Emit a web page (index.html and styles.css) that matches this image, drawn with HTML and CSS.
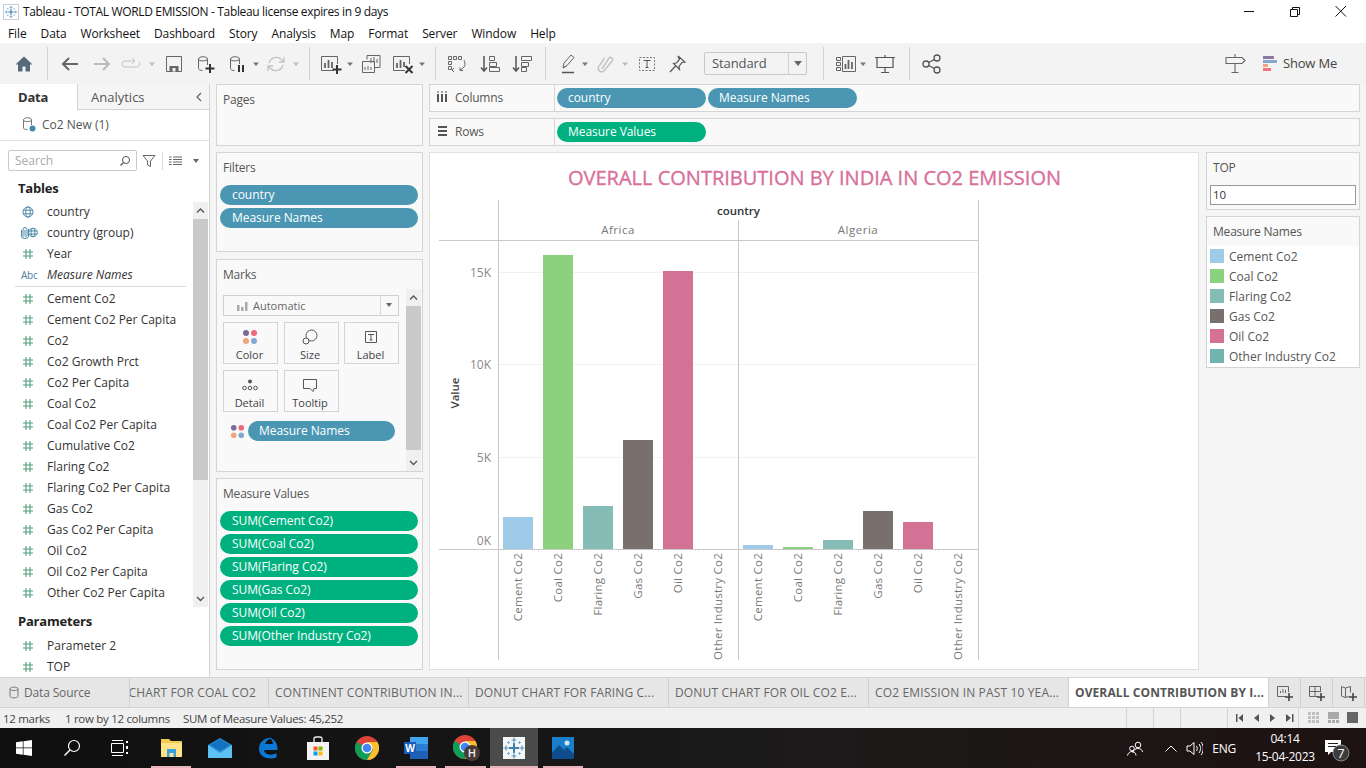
FILE: index.html
```html
<!DOCTYPE html>
<html lang="en">
<head>
<meta charset="utf-8">
<title>Tableau - TOTAL WORLD EMISSION</title>
<link rel="stylesheet" href="styles.css">
</head>
<body>
<svg class="defs" width="0" height="0" aria-hidden="true">
  <defs>
    <symbol id="hash" viewBox="0 0 12 12"><path d="M4 1v10M8 1v10M1 4h10M1 8h10" fill="none" stroke="#4f9e7b" stroke-width="1.1"/></symbol>
    <symbol id="globe" viewBox="0 0 12 12"><g fill="none" stroke="#4f8aa8"><circle cx="6" cy="6" r="5"/><ellipse cx="6" cy="6" rx="2.2" ry="5"/><path d="M1 4.2h10M1 7.8h10"/></g></symbol>
    <symbol id="caret" viewBox="0 0 8 24"><path d="M1 10.5h6l-3 3.5z" fill="#777"/></symbol>
    <symbol id="caretl" viewBox="0 0 8 24"><path d="M1 10.5h6l-3 3.5z" fill="#bbb"/></symbol>
    <symbol id="dots" viewBox="0 0 16 16"><circle cx="4" cy="4" r="3" fill="#7b6a94"/><circle cx="12" cy="4" r="3" fill="#ee6a78"/><circle cx="4" cy="12" r="3" fill="#f0a67c"/><circle cx="12" cy="12" r="3" fill="#84a8d0"/></symbol>
    <symbol id="up" viewBox="0 0 15 15"><path d="M4 9.5l3.5-3.5 3.5 3.5" fill="none" stroke="#555" stroke-width="1.4"/></symbol>
    <symbol id="down" viewBox="0 0 15 15"><path d="M4 6l3.5 3.5L11 6" fill="none" stroke="#555" stroke-width="1.4"/></symbol>
    <symbol id="flake" viewBox="0 0 24 24"><g fill="none"><path d="M12 7v10M7 12h10" stroke="#3f7ea8" stroke-width="2"/><path d="M12 1.500v5M9.500 4h5M12 17.500v5M9.500 20h5M1.500 12h5M4 9.500v5M17.500 12h5M20 9.500v5" stroke="#5a94bc" stroke-width="1.200"/><path d="M6.500 5v3M5 6.500h3M17.500 5v3M16 6.500h3M6.500 16v3M5 17.500h3M17.500 16v3M16 17.500h3" stroke="#7fb0d0" stroke-width="1"/></g></symbol>
  </defs>
</svg>

<header class="titlebar">
  <svg class="app-icon" width="16" height="16" viewBox="0 0 24 24"><use href="#flake"/></svg>
  <span class="title-text">Tableau - TOTAL WORLD EMISSION - Tableau license expires in 9 days</span>
  <div class="win-controls">
    <svg width="46" height="22" viewBox="0 0 46 22"><path d="M18 10.500h10" stroke="#111"/></svg>
    <svg width="46" height="22" viewBox="0 0 46 22"><path d="M18.500 8.500h7v7h-7zM20.500 8.500v-2h7v7h-2" fill="none" stroke="#111"/></svg>
    <svg width="46" height="22" viewBox="0 0 46 22"><path d="M17.500 5l10.500 10.500M28 5L17.500 15.500" stroke="#111" fill="none"/></svg>
  </div>
</header>

<nav class="menubar">
  <span>File</span><span>Data</span><span>Worksheet</span><span>Dashboard</span><span>Story</span><span>Analysis</span><span>Map</span><span>Format</span><span>Server</span><span>Window</span><span>Help</span>
</nav>

<div class="toolbar">
  <svg class="tb ml12" viewBox="0 0 24 24"><path d="M12 4.500L3.500 12.500H6v7h4.500v-5h3v5H18v-7h2.500z" fill="#566a7d"/></svg>
  <i class="sep ml11"></i>
  <svg class="tb ml10" viewBox="0 0 24 24"><path d="M20 12H5M11 6l-6 6 6 6" fill="none" stroke="#666" stroke-width="2"/></svg>
  <svg class="tb ml8" viewBox="0 0 24 24"><path d="M4 12h15M13 6l6 6-6 6" fill="none" stroke="#bbb" stroke-width="2"/></svg>
  <svg class="tb ml5" viewBox="0 0 24 24"><path d="M15 9H6a3 3 0 0 0 0 6h12a3 3 0 0 0 2-5M13 6l3 3-3 3" fill="none" stroke="#c4c4c4"/></svg>
  <svg class="cr ml5"><use href="#caretl"/></svg>
  <svg class="tb ml6" viewBox="0 0 24 24"><path d="M4.500 4.500h15v15h-15z" fill="none" stroke="#666"/><path d="M7.500 14h9v5.500h-9z" fill="#666"/><path d="M10.500 16h3v3.500h-3z" fill="#f3f3f3"/></svg>
  <svg class="tb ml7" viewBox="0 0 24 24"><path d="M5.500 7c0-3 9-3 9 0v6M5.500 7c0 2.500 9 2.500 9 0M5.500 7v9.500c0 1 1.500 2 4 2" fill="none" stroke="#666"/><path d="M17 12v9M12.500 16.500h9" stroke="#333" stroke-width="2"/></svg>
  <svg class="tb ml8" viewBox="0 0 24 24"><path d="M5.500 7c0-3 9-3 9 0v5M5.500 7c0 2.500 9 2.500 9 0M5.500 7v9.500c0 1 1.500 2 4 2" fill="none" stroke="#666"/><path d="M14 13v7M18 13v7" stroke="#333" stroke-width="2"/></svg>
  <svg class="cr ml3"><use href="#caret"/></svg>
  <svg class="tb ml4" viewBox="0 0 24 24"><path d="M5 11a7.500 7.500 0 0 1 13-3l2 2M19 13a7.500 7.500 0 0 1-13 3l-2-2M20 5v5h-5M4 19v-5h5" fill="none" stroke="#c4c4c4" stroke-width="1.300"/></svg>
  <svg class="cr ml4"><use href="#caretl"/></svg>
  <i class="sep ml9"></i>
  <svg class="tb ml9" viewBox="0 0 24 24"><path d="M15 18.500H2.500v-14h16V12" fill="none" stroke="#666"/><path d="M6 11v5M9.500 8v8M13 10v6" stroke="#666" stroke-width="1.800"/><path d="M18 13v9M13.500 17.500h9" stroke="#333" stroke-width="2"/></svg>
  <svg class="cr ml3"><use href="#caret"/></svg>
  <svg class="tb ml5" viewBox="0 0 24 24"><path d="M8 7.500V3.500h13v12h-5M3.500 9.500h12v11h-12z" fill="#f3f3f3" stroke="#666"/><path d="M12 11V6M15 11V5M18 11V7M6 18v-3M9 18v-4M12 18v-3" stroke="#666"/></svg>
  <svg class="tb ml8" viewBox="0 0 24 24"><path d="M14 18.500H2.500v-14h16V12" fill="none" stroke="#666"/><path d="M6 11v5M9.500 8v8M13 10v5" stroke="#666" stroke-width="1.800"/><path d="M14.500 14l7 7M21.500 14l-7 7" stroke="#333" stroke-width="2"/></svg>
  <svg class="cr ml3"><use href="#caret"/></svg>
  <i class="sep ml9"></i>
  <svg class="tb ml9" viewBox="0 0 24 24"><path d="M3.500 4.500h3v3h-3zM8.500 4.500h3v3h-3zM13.500 4.500h3v3h-3zM3.500 9.500h3v3h-3zM3.500 14.500h3v3h-3z" fill="none" stroke="#666"/><path d="M19 8c2 4 1 8-4 10M15 15.500V18.500h3M9 16l-2 2 2 2" fill="none" stroke="#666"/></svg>
  <svg class="tb ml9" viewBox="0 0 24 24"><path d="M6 4v15M3 15.500L6 19l3-3.500" fill="none" stroke="#555" stroke-width="1.500"/><path d="M11.500 4.500h5v4h-5zM11.500 10.500h7v4h-7zM11.500 15.500h10v4h-10z" fill="none" stroke="#666"/></svg>
  <svg class="tb ml8" viewBox="0 0 24 24"><path d="M6 4v15M3 15.500L6 19l3-3.500" fill="none" stroke="#555" stroke-width="1.500"/><path d="M11.500 4.500h10v4h-10zM11.500 10.500h7v4h-7zM11.500 15.500h5v4h-5z" fill="none" stroke="#666"/></svg>
  <i class="sep ml11"></i>
  <svg class="tb ml10" viewBox="0 0 24 24"><path d="M7 16l1-5 7-8 3 2.500-7 8zM7 16l4-2.500" fill="none" stroke="#666"/><path d="M6 20.500h12" stroke="#555" stroke-width="1.500"/></svg>
  <svg class="cr ml1"><use href="#caret"/></svg>
  <svg class="tb ml4" viewBox="0 0 24 24"><path d="M9 17l7-11a2.200 2.200 0 0 1 3.500 2.500L11 19a3.500 3.500 0 0 1-5.500-4l6-9" fill="none" stroke="#c4c4c4" stroke-width="1.500"/></svg>
  <svg class="cr ml4"><use href="#caretl"/></svg>
  <svg class="tb ml6" viewBox="0 0 24 24"><path d="M4.500 5.500h15v13h-15z" fill="none" stroke="#777" stroke-dasharray="2 1.500"/><path d="M8.500 8.500h7M12 8.500v7M10.500 15.500h3" fill="none" stroke="#555"/></svg>
  <svg class="tb ml6" viewBox="0 0 24 24"><path d="M13 4l7 6-3 .5-3 4 .5 3-6-6 3-.5 3-3.500zM10.500 14L5 20" fill="none" stroke="#555" stroke-width="1.200"/></svg>
  <div class="std-select"><span class="std-text">Standard</span><span class="std-arrow"></span></div>
  <i class="sep ml16"></i>
  <svg class="tb ml10" viewBox="0 0 24 24"><path d="M2.500 5.500h4v3h-4zM2.500 10.500h4v3h-4zM2.500 15.500h4v3h-4zM8.500 4.500h13v15h-13z" fill="none" stroke="#666"/><path d="M11.500 17v-5M14.500 17V8M18 17v-7" stroke="#666" stroke-width="1.800"/></svg>
  <svg class="cr ml1"><use href="#caret"/></svg>
  <svg class="tb ml6" viewBox="0 0 24 24"><path d="M2 5.500h20M4 5.500v10h16v-10M12 15.500v5M8 20.500h8M12 3v2.500" fill="none" stroke="#555" stroke-width="1.200"/></svg>
  <i class="sep ml12"></i>
  <svg class="tb ml10" viewBox="0 0 24 24"><g fill="none" stroke="#555" stroke-width="1.300"><circle cx="6" cy="12" r="3"/><circle cx="17" cy="6" r="3"/><circle cx="17" cy="18" r="3"/><path d="M8.500 10.500l6-3M8.500 13.500l6 3"/></g></svg>
  <svg class="tb tb-sign" viewBox="0 0 24 24"><path d="M12 2v3M3 5.500h16l3 3-3 3H3zM12 11.500V20M8.500 20.500h7" fill="none" stroke="#666" stroke-width="1.100"/></svg>
  <svg class="showme-icon" width="14" height="16" viewBox="0 0 14 16"><path d="M0 0h11v3H0z" fill="#8d7aa3"/><path d="M0 4h14v3H0z" fill="#84a8d0"/><path d="M0 8h5v3H0z" fill="#f0a67c"/><path d="M0 12h8v3H0z" fill="#f4737e"/></svg>
  <span class="showme-text">Show Me</span>
</div>

<main class="main">
  <aside class="sidebar">
    <div class="side-tabs">
      <div class="side-tab active">Data</div>
      <div class="side-tab">Analytics<svg class="collapse" width="10" height="12" viewBox="0 0 10 12"><path d="M7 2L3 6l4 4" fill="none" stroke="#666" stroke-width="1.200"/></svg></div>
    </div>
    <div class="ds-row">
      <svg width="14" height="16" viewBox="0 0 14 16"><path d="M1.500 4c0-3 8-3 8 0v5M1.500 4c0 2.200 8 2.200 8 0M1.500 4v8c0 1 1.500 1.500 4 1.500" fill="none" stroke="#777"/><circle cx="10.500" cy="12.500" r="3" fill="#3f8aae"/></svg>
      <span>Co2 New (1)</span>
    </div>
    <div class="search-row">
      <div class="searchbox"><span>Search</span><svg width="12" height="12" viewBox="0 0 12 12"><circle cx="7" cy="5" r="3.500" fill="none" stroke="#555"/><path d="M4.500 7.500L1.500 10.500" stroke="#555" stroke-width="1.300"/></svg></div>
      <svg class="filter-ic" width="14" height="14" viewBox="0 0 14 14"><path d="M1 1.500h12L8.500 7v5.500L5.500 11V7z" fill="none" stroke="#666"/></svg>
      <i class="search-sep"></i>
      <svg width="13" height="10" viewBox="0 0 13 10"><path d="M0 1h2.500M4 1h9M0 3.500h2.500M4 3.500h9M0 6h2.500M4 6h9M0 8.500h2.500M4 8.500h9" stroke="#666"/></svg>
      <svg class="list-caret" width="8" height="6" viewBox="0 0 8 6"><path d="M1 1h6L4 5z" fill="#666"/></svg>
    </div>
    <h3 class="side-head">Tables</h3>
    <div class="fields-wrap">
      <ul class="fields">
        <li><svg class="fi" viewBox="0 0 12 12"><use href="#globe"/></svg>country</li>
        <li><svg class="fi-wide" width="18" height="13" viewBox="0 0 18 13"><path d="M3 11V3.500a2 2 0 0 1 4 0V9.500a1 1 0 0 1-2 0V4M1.500 4v6.500a3.500 2 0 0 0 7 0V3" fill="none" stroke="#4f8aa8"/><g fill="none" stroke="#4f8aa8"><circle cx="13" cy="6.500" r="4.300"/><ellipse cx="13" cy="6.500" rx="1.800" ry="4.300"/><path d="M9 5h8M9 8h8"/></g></svg>country (group)</li>
        <li><svg class="fi" viewBox="0 0 12 12"><use href="#hash"/></svg>Year</li>
        <li class="italic"><span class="abc">Abc</span>Measure Names</li>
        <li class="field-sep"></li>
        <li><svg class="fi" viewBox="0 0 12 12"><use href="#hash"/></svg>Cement Co2</li>
        <li><svg class="fi" viewBox="0 0 12 12"><use href="#hash"/></svg>Cement Co2 Per Capita</li>
        <li><svg class="fi" viewBox="0 0 12 12"><use href="#hash"/></svg>Co2</li>
        <li><svg class="fi" viewBox="0 0 12 12"><use href="#hash"/></svg>Co2 Growth Prct</li>
        <li><svg class="fi" viewBox="0 0 12 12"><use href="#hash"/></svg>Co2 Per Capita</li>
        <li><svg class="fi" viewBox="0 0 12 12"><use href="#hash"/></svg>Coal Co2</li>
        <li><svg class="fi" viewBox="0 0 12 12"><use href="#hash"/></svg>Coal Co2 Per Capita</li>
        <li><svg class="fi" viewBox="0 0 12 12"><use href="#hash"/></svg>Cumulative Co2</li>
        <li><svg class="fi" viewBox="0 0 12 12"><use href="#hash"/></svg>Flaring Co2</li>
        <li><svg class="fi" viewBox="0 0 12 12"><use href="#hash"/></svg>Flaring Co2 Per Capita</li>
        <li><svg class="fi" viewBox="0 0 12 12"><use href="#hash"/></svg>Gas Co2</li>
        <li><svg class="fi" viewBox="0 0 12 12"><use href="#hash"/></svg>Gas Co2 Per Capita</li>
        <li><svg class="fi" viewBox="0 0 12 12"><use href="#hash"/></svg>Oil Co2</li>
        <li><svg class="fi" viewBox="0 0 12 12"><use href="#hash"/></svg>Oil Co2 Per Capita</li>
        <li><svg class="fi" viewBox="0 0 12 12"><use href="#hash"/></svg>Other Co2 Per Capita</li>
      </ul>
      <div class="scrollbar sb-fields">
        <svg class="sb-btn" width="15" height="17" viewBox="0 0 15 15"><use href="#up"/></svg>
        <div class="sb-track"><div class="sb-thumb thumb-fields"></div></div>
        <svg class="sb-btn" width="15" height="17" viewBox="0 0 15 15"><use href="#down"/></svg>
      </div>
    </div>
    <h3 class="side-head params">Parameters</h3>
    <ul class="fields">
      <li><svg class="fi" viewBox="0 0 12 12"><use href="#hash"/></svg>Parameter 2</li>
      <li><svg class="fi" viewBox="0 0 12 12"><use href="#hash"/></svg>TOP</li>
    </ul>
  </aside>

  <div class="cards">
    <section class="card card-pages"><h4>Pages</h4></section>
    <section class="card card-filters">
      <h4>Filters</h4>
      <div class="pill-stack">
        <div class="pill blue">country</div>
        <div class="pill blue">Measure Names</div>
      </div>
    </section>
    <section class="card card-marks">
      <h4>Marks</h4>
      <div class="marks-body">
        <div class="mark-select">
          <svg width="14" height="12" viewBox="0 0 14 12"><path d="M2 5h2.500v6H2zM6 7h2.500v4H6zM10 2h2.500v9H10z" fill="#aaa"/></svg>
          <span>Automatic</span>
          <i class="mark-arrow"></i>
        </div>
        <div class="mark-grid">
          <div class="mark-btn"><svg width="16" height="16"><use href="#dots"/></svg><span>Color</span></div>
          <div class="mark-btn"><svg width="16" height="16" viewBox="0 0 16 16"><circle cx="9.500" cy="6.500" r="5.500" fill="none" stroke="#555"/><circle cx="4" cy="12" r="3" fill="#fbfbfb" stroke="#555"/></svg><span>Size</span></div>
          <div class="mark-btn"><svg width="16" height="16" viewBox="0 0 16 16"><path d="M2.500 2.500h11v11h-11z" fill="none" stroke="#555"/><path d="M5 5.500h6M8 5.500v5.500M6.500 11h3" fill="none" stroke="#555"/></svg><span>Label</span></div>
          <div class="mark-btn"><svg width="16" height="16" viewBox="0 0 16 16"><circle cx="8" cy="4.500" r="2" fill="#555"/><g fill="none" stroke="#555"><circle cx="2.500" cy="11" r="1.800"/><circle cx="8" cy="11" r="1.800"/><circle cx="13.500" cy="11" r="1.800"/></g></svg><span>Detail</span></div>
          <div class="mark-btn"><svg width="16" height="16" viewBox="0 0 16 16"><path d="M1.500 2.500h13v9H12l-1 3-3-3H1.500z" fill="none" stroke="#555"/></svg><span>Tooltip</span></div>
        </div>
        <div class="mark-pill-row">
          <svg width="15" height="15"><use href="#dots"/></svg>
          <div class="pill blue mark-pill">Measure Names</div>
        </div>
      </div>
      <div class="scrollbar sb-marks">
        <svg class="sb-btn" width="15" height="17" viewBox="0 0 15 15"><use href="#up"/></svg>
        <div class="sb-track"><div class="sb-thumb thumb-marks"></div></div>
        <svg class="sb-btn" width="15" height="17" viewBox="0 0 15 15"><use href="#down"/></svg>
      </div>
    </section>
    <section class="card card-values">
      <h4>Measure Values</h4>
      <div class="pill-stack">
        <div class="pill green">SUM(Cement Co2)</div>
        <div class="pill green">SUM(Coal Co2)</div>
        <div class="pill green">SUM(Flaring Co2)</div>
        <div class="pill green">SUM(Gas Co2)</div>
        <div class="pill green">SUM(Oil Co2)</div>
        <div class="pill green">SUM(Other Industry Co2)</div>
      </div>
    </section>
  </div>

  <div class="workspace">
    <div class="shelf">
      <div class="shelf-label"><svg width="12" height="12" viewBox="0 0 12 12"><path d="M2 3v8M6 3v8M10 3v8" stroke="#555" stroke-width="2"/><path d="M1 1h2M5 1h2M9 1h2" stroke="#555"/></svg><span>Columns</span></div>
      <div class="shelf-pills"><div class="pill blue shelf-pill">country</div><div class="pill blue shelf-pill">Measure Names</div></div>
    </div>
    <div class="shelf">
      <div class="shelf-label"><svg width="12" height="12" viewBox="0 0 12 12"><path d="M2 2h9M2 6h9M2 10h9" stroke="#555" stroke-width="2"/></svg><span>Rows</span></div>
      <div class="shelf-pills"><div class="pill green shelf-pill">Measure Values</div></div>
    </div>
    <div class="view-row">
      <section class="view">
        <svg class="chart" width="769" height="518" viewBox="430 152 769 518">
          <text class="chart-title" x="814.500" y="185" text-anchor="middle" textLength="493" lengthAdjust="spacing">OVERALL CONTRIBUTION BY INDIA IN CO2 EMISSION</text>
          <g class="grid"><path d="M498 272.500H978M498 364.500H978M498 457.500H978"/></g>
          <g class="axis">
            <path d="M498.500 200V660M738.500 220V660M978.500 200V660M439 240.500H978M439 549.500H978"/>
          </g>
          <g class="ticks"><path d="M538.500 550v3M578.500 550v3M618.500 550v3M658.500 550v3M698.500 550v3M778.500 550v3M818.500 550v3M858.500 550v3M898.500 550v3M938.500 550v3"/></g>
          <text class="hdr-bold" x="738.500" y="215" text-anchor="middle">country</text>
          <text class="hdr" x="618" y="234" text-anchor="middle">Africa</text>
          <text class="hdr" x="858" y="234" text-anchor="middle">Algeria</text>
          <text class="tick-text" x="491" y="277" text-anchor="end">15K</text>
          <text class="tick-text" x="491" y="369" text-anchor="end">10K</text>
          <text class="tick-text" x="491" y="462" text-anchor="end">5K</text>
          <text class="tick-text" x="491" y="545" text-anchor="end">0K</text>
          <text class="axis-title" transform="translate(459 393) rotate(-90)" text-anchor="middle">Value</text>
          <g class="bars">
            <rect class="c1" x="503" y="517" width="30" height="32"/>
            <rect class="c2" x="543" y="255" width="30" height="294"/>
            <rect class="c3" x="583" y="506" width="30" height="43"/>
            <rect class="c4" x="623" y="440" width="30" height="109"/>
            <rect class="c5" x="663" y="271" width="30" height="278"/>
            <rect class="c1" x="743" y="545" width="30" height="4"/>
            <rect class="c2" x="783" y="547" width="30" height="2"/>
            <rect class="c3" x="823" y="540" width="30" height="9"/>
            <rect class="c4" x="863" y="511" width="30" height="38"/>
            <rect class="c5" x="903" y="522" width="30" height="27"/>
          </g>
          <g class="cat">
            <text transform="translate(522 553) rotate(-90)" text-anchor="end">Cement Co2</text>
            <text transform="translate(562 553) rotate(-90)" text-anchor="end">Coal Co2</text>
            <text transform="translate(602 553) rotate(-90)" text-anchor="end">Flaring Co2</text>
            <text transform="translate(642 553) rotate(-90)" text-anchor="end">Gas Co2</text>
            <text transform="translate(682 553) rotate(-90)" text-anchor="end">Oil Co2</text>
            <text transform="translate(722 553) rotate(-90)" text-anchor="end">Other Industry Co2</text>
            <text transform="translate(762 553) rotate(-90)" text-anchor="end">Cement Co2</text>
            <text transform="translate(802 553) rotate(-90)" text-anchor="end">Coal Co2</text>
            <text transform="translate(842 553) rotate(-90)" text-anchor="end">Flaring Co2</text>
            <text transform="translate(882 553) rotate(-90)" text-anchor="end">Gas Co2</text>
            <text transform="translate(922 553) rotate(-90)" text-anchor="end">Oil Co2</text>
            <text transform="translate(962 553) rotate(-90)" text-anchor="end">Other Industry Co2</text>
          </g>
        </svg>
      </section>
      <aside class="right-col">
        <section class="card card-top">
          <h4>TOP</h4>
          <div class="top-input">10</div>
        </section>
        <section class="card card-legend">
          <h4>Measure Names</h4>
          <ul class="legend">
            <li><i class="sw c1bg"></i>Cement Co2</li>
            <li><i class="sw c2bg"></i>Coal Co2</li>
            <li><i class="sw c3bg"></i>Flaring Co2</li>
            <li><i class="sw c4bg"></i>Gas Co2</li>
            <li><i class="sw c5bg"></i>Oil Co2</li>
            <li><i class="sw c6bg"></i>Other Industry Co2</li>
          </ul>
        </section>
      </aside>
    </div>
  </div>
</main>

<div class="tabs">
  <div class="tab tab-source"><svg width="10" height="13" viewBox="0 0 10 13"><path d="M1 3c0-2.500 8-2.500 8 0v7c0 2.500-8 2.500-8 0zM1 3c0 2 8 2 8 0" fill="none" stroke="#777"/></svg><span>Data Source</span></div>
  <div class="tab tab-clip"><span>CHART FOR COAL CO2</span></div>
  <div class="tab tab-w"><span>CONTINENT CONTRIBUTION IN...</span></div>
  <div class="tab tab-w"><span>DONUT CHART FOR FARING C...</span></div>
  <div class="tab tab-w"><span>DONUT CHART FOR OIL CO2 E...</span></div>
  <div class="tab tab-w"><span>CO2 EMISSION IN PAST 10 YEA...</span></div>
  <div class="tab tab-w tab-active"><span>OVERALL CONTRIBUTION BY I...</span></div>
  <div class="tab tab-add"><svg width="18" height="18" viewBox="0 0 18 18"><path d="M10 12.500H1.500v-10h11V8" fill="none" stroke="#666"/><path d="M4.500 9V7M7 9V5M9.500 9V6" stroke="#666"/><path d="M13 9v8M9 13h8" stroke="#444" stroke-width="1.600"/></svg></div>
  <div class="tab tab-add"><svg width="18" height="18" viewBox="0 0 18 18"><path d="M10 12.500H1.500v-10h11V8M7 2.500v10M1.500 7.500h11" fill="none" stroke="#666"/><path d="M13 9v8M9 13h8" stroke="#444" stroke-width="1.600"/></svg></div>
  <div class="tab tab-add"><svg width="18" height="18" viewBox="0 0 18 18"><path d="M1.500 2.500l4 1.500 5-1.500v6M5.500 4v9.500M9 12.500l-3.500 1-4-1.500v-9.500" fill="none" stroke="#666"/><path d="M13 9v8M9 13h8" stroke="#444" stroke-width="1.600"/></svg></div>
</div>

<footer class="status">
  <span class="st-a">12 marks</span>
  <span class="st-b">1 row by 12 columns</span>
  <span class="st-c">SUM of Measure Values: 45,252</span>
  <i class="st-div st-d1"></i><i class="st-div st-d2"></i><i class="st-div st-d3"></i><i class="st-div st-d4"></i>
  <svg class="pager" width="64" height="10" viewBox="0 0 64 10"><path d="M0 1h1.500v8H0zM7 1v8L2.500 5zM23 1v8l-5-4zM34 1l5 4-5 4zM50 1l5 4-5 4zM56 1h1.500v8H56z" fill="#555"/></svg>
  <i class="st-div st-d5"></i>
  <svg class="views" width="50" height="12" viewBox="0 0 50 12"><path d="M0 0h3v3H0zM4 0h3v3H4zM8 0h3v3H8zM0 4h3v3H0zM4 4h3v3H4zM8 4h3v3H8zM0 8h3v3H0zM4 8h3v3H4zM8 8h3v3H8z" fill="#c0c0c0"/><path d="M20 0h11v7H20zM20 8h3v3h-3zM24 8h3v3h-3zM28 8h3v3h-3z" fill="#aaa"/><path d="M39 0h11v11H39z" fill="#666"/></svg>
</footer>

<div class="taskbar">
  <svg class="tk ws" width="16" height="16" viewBox="0 0 16 16"><path d="M0 2.300l6.800-1v6.300H0zM7.500 1.200L16 0v7.600H7.500zM0 8.300h6.800v6.400L0 13.700zM7.500 8.300H16V16l-8.500-1.200z" fill="#fff"/></svg>
  <svg class="tk ts" width="18" height="18" viewBox="0 0 18 18"><circle cx="11" cy="7" r="5.500" fill="none" stroke="#fff" stroke-width="1.200"/><path d="M7 11l-5.500 5.500" stroke="#fff" stroke-width="1.500"/></svg>
  <svg class="tk tv" width="18" height="16" viewBox="0 0 18 16"><path d="M.5 3.500h12v9H.5zM1 .5h11M1 15.500h11" fill="none" stroke="#fff"/><path d="M15 1h2v2h-2zM15 6h2v3h-2zM15 12h2v2h-2z" fill="#fff"/></svg>
  <svg class="tk te" width="22" height="20" viewBox="0 0 22 20"><path d="M0 1h8l2 2h11v15a1 1 0 0 1-1 1H1a1 1 0 0 1-1-1z" fill="#f2c94f"/><path d="M0 5h21v13a1 1 0 0 1-1 1H1a1 1 0 0 1-1-1z" fill="#ffe28a"/><path d="M6 11h9v8h-2.500v-4h-4v4H6z" fill="#3aa0dc"/></svg>
  <svg class="tk tm" width="24" height="20" viewBox="0 0 24 20"><path d="M0 7L12 0l12 7v13H0z" fill="#2a8fd8"/><path d="M0 7l12 8 12-8v13H0z" fill="#5cc0f0"/><path d="M2 7l10 6 10-6-10-6z" fill="#1473c0"/></svg>
  <svg class="tk tedge" width="22" height="22" viewBox="0 0 22 22"><path d="M20.500 13H7c.5 5 8 6 12.500 3v4.500C13 23 2 21 2 12 2 4 9.500 0 15 1c-3 .5-6 2.500-7 6h8c0-3-2-5-4-6 5 .5 9 5 8.500 12z" fill="#0a78d4"/></svg>
  <svg class="tk tstore" width="22" height="24" viewBox="0 0 22 24"><path d="M7 6V3a2 2 0 0 1 2-2h4a2 2 0 0 1 2 2v3" fill="none" stroke="#eee" stroke-width="1.300"/><path d="M0 6h22v18H0z" fill="#f3f3f3"/><path d="M6.500 10.500h4v4h-4z" fill="#ef5b25"/><path d="M11.500 10.500h4v4h-4z" fill="#7fba00"/><path d="M6.500 15.500h4v4h-4z" fill="#00a4ef"/><path d="M11.500 15.500h4v4h-4z" fill="#ffb900"/></svg>
  <svg class="tk tc1" width="24" height="24" viewBox="0 0 24 24"><circle cx="12" cy="12" r="12" fill="#db4437"/><path d="M12 12L1.600 6A12 12 0 0 0 12 24l6-10.400z" fill="#0f9d58"/><path d="M12 6h10.400A12 12 0 0 1 12 24l6-10.400z" fill="#fbc02d"/><circle cx="12" cy="12" r="5.500" fill="#fff"/><circle cx="12" cy="12" r="4.300" fill="#4285f4"/></svg>
  <svg class="tk tw" width="24" height="22" viewBox="0 0 24 22"><path d="M6 0h18v22H6z" fill="#1f5fb4"/><path d="M6 0h18v7H6z" fill="#41a5ee"/><path d="M6 7h18v7H6z" fill="#2b7cd3"/><path d="M0 5h12v12H0z" fill="#185abd"/><text class="word-w" x="6" y="14.500" text-anchor="middle">W</text></svg>
  <svg class="tk tc2" width="30" height="30" viewBox="0 0 30 30"><g transform="translate(0 1)"><circle cx="12" cy="12" r="12" fill="#db4437"/><path d="M12 12L1.600 6A12 12 0 0 0 12 24l6-10.400z" fill="#0f9d58"/><path d="M12 6h10.400A12 12 0 0 1 12 24l6-10.400z" fill="#fbc02d"/><circle cx="12" cy="12" r="5.500" fill="#fff"/><circle cx="12" cy="12" r="4.300" fill="#4285f4"/></g><circle cx="19" cy="19" r="8" fill="#4a3a36"/><text class="h-badge" x="19" y="23" text-anchor="middle">H</text></svg>
  <div class="tk tactive"><svg width="24" height="24" viewBox="0 0 24 24"><path d="M1 1h22v22H1z" fill="#f4f6f8"/><use href="#flake"/></svg></div>
  <svg class="tk tp" width="22" height="22" viewBox="0 0 22 22"><path d="M0 0h22v22H0z" fill="#1a7fc8"/><path d="M0 16l7-8 5 5 3-3 7 7v5H0z" fill="#0d4d8c"/><circle cx="15" cy="6" r="2.500" fill="#cfe6f7"/></svg>
  <div class="tray">
    <svg class="tr-people" width="16" height="15" viewBox="0 0 16 15"><g fill="none" stroke="#fff"><circle cx="11" cy="4" r="2.800"/><path d="M6 12c.5-3 2-4.500 5-4.500S15 9 15.500 11"/><circle cx="5" cy="7.500" r="2.300"/><path d="M.5 14.500C1 12 3 10.500 5 10.500s4 1.500 4 4"/></g></svg>
    <svg class="tr-caret" width="12" height="7" viewBox="0 0 12 7"><path d="M.5 6.500L6 1l5.500 5.500" fill="none" stroke="#fff"/></svg>
    <svg class="tr-sound" width="17" height="15" viewBox="0 0 17 15"><path d="M1 5h3l4-3.500v12L4 10H1z M10.500 5c1 1.500 1 3.500 0 5M13 3c2 2.500 2 6.500 0 9M15 1c3 3.500 3 9.500 0 13" fill="none" stroke="#fff"/></svg>
    <span class="tr-lang">ENG</span>
    <div class="clock"><span>04:14</span><span>15-04-2023</span></div>
    <svg class="tr-note" width="26" height="24" viewBox="0 0 26 24"><path d="M0 2h16v12H6l-3 3v-3H0z" fill="#fff"/><path d="M3 5.500h10M3 8.500h10" stroke="#222"/><circle cx="16" cy="15" r="8" fill="#3c3c3c" stroke="#888"/><text class="note-n" x="16" y="19.500" text-anchor="middle">7</text></svg>
  </div>
  <i class="ul ul1"></i><i class="ul ul2"></i><i class="ul ul3"></i><i class="ul ul4"></i><i class="ul ul5"></i>
</div>
</body>
</html>
```

FILE: styles.css
```css
* { box-sizing: border-box; }
html, body { margin: 0; padding: 0; }
body {
  width: 1366px; height: 768px; overflow: hidden;
  display: flex; flex-direction: column;
  font-family: "Open Sans", "Noto Sans", sans-serif;
  font-size: 12px; color: #333; background: #fff;
  position: relative;
}
.defs { position: absolute; }
ul { list-style: none; margin: 0; padding: 0; }
h3, h4 { margin: 0; }

.titlebar { height: 23px; display: flex; align-items: center; padding-left: 3px; background: #fff; color: #111; flex: none; }
.app-icon { flex: none; border: 1px solid #ccd; }
.title-text { margin-left: 4px; font-size: 12px; letter-spacing: -.345px; }
.win-controls { margin-left: auto; display: flex; margin-right: 2px; }

.menubar { height: 20px; display: flex; align-items: center; gap: 14px; padding-left: 8px; color: #111; font-size: 12px; letter-spacing: -.1px; flex: none; }

.toolbar { height: 41px; background: #f3f3f3; display: flex; align-items: center; flex: none; }
.tb { width: 24px; height: 24px; flex: none; }
.cr { width: 8px; height: 24px; flex: none; }
.sep { width: 1px; height: 33px; background: #d2d2d2; flex: none; }
.ml1 { margin-left: 1px; } .ml3 { margin-left: 3px; } .ml4 { margin-left: 4px; }
.ml5 { margin-left: 5px; } .ml6 { margin-left: 6px; } .ml7 { margin-left: 7px; }
.ml8 { margin-left: 8px; } .ml9 { margin-left: 9px; } .ml10 { margin-left: 10px; }
.ml11 { margin-left: 11px; } .ml12 { margin-left: 12px; } .ml16 { margin-left: 16px; }
.std-select { margin-left: 15px; width: 103px; height: 23px; border: 1px solid #c8c8c8; border-radius: 2px; display: flex; align-items: center; flex: none; }
.std-text { flex: 1; padding: 0 0 2px 7px; color: #555; font-size: 13px; letter-spacing: -.1px; }
.std-arrow { width: 18px; height: 21px; border-left: 1px solid #d0d0d0; position: relative; }
.std-arrow::after { content: ""; position: absolute; left: 5px; top: 8px; border: 4px solid transparent; border-top: 5px solid #666; border-bottom: 0; }
.tb-sign { margin-left: auto; }
.showme-icon { margin-left: 16px; flex: none; }
.showme-text { margin-left: 6px; margin-right: 29px; padding-bottom: 2px; color: #444; font-size: 13px; letter-spacing: -.2px; }

.main { height: 593px; display: flex; background: #f5f5f5; flex: none; }

.sidebar { width: 210px; flex: none; background: #fff; border-right: 1px solid #d4d4d4; }
.side-tabs { height: 26px; display: flex; }
.side-tab { display: flex; align-items: center; font-size: 13px; color: #555; }
.side-tab.active { width: 77px; padding-left: 18px; font-weight: 700; color: #333; letter-spacing: -.2px; }
.side-tab:not(.active) { width: 132px; padding-left: 13px; background: #f5f5f5; border-left: 1px solid #d4d4d4; border-bottom: 1px solid #d4d4d4; }
.collapse { margin-left: auto; margin-right: 5px; }
.ds-row { height: 31px; display: flex; align-items: center; padding: 0 0 2px 22px; gap: 6px; border-bottom: 1px solid #e0e0e0; color: #555; }
.search-row { display: flex; align-items: center; padding: 9px 0 0 8px; }
.searchbox { width: 129px; height: 21px; border: 1px solid #c9c9c9; border-radius: 2px; display: flex; align-items: center; justify-content: space-between; padding: 0 5px 0 6px; color: #aaa; flex: none; }
.filter-ic { margin-left: 5px; }
.search-sep { width: 1px; height: 18px; background: #ddd; margin: 0 6px; }
.list-caret { margin-left: 10px; }
.side-head { font-size: 13px; font-weight: 700; color: #222; padding-left: 18px; height: 20px; line-height: 20px; margin-top: 7px; letter-spacing: -.2px; }
.fields-wrap { display: flex; height: 405px; margin-top: 4px; overflow: hidden; }
.fields { flex: none; width: 193px; overflow: hidden; }
.fields li { height: 21px; display: flex; align-items: center; padding: 0 0 2px 47px; position: relative; white-space: nowrap; }
.fields li.italic { font-style: italic; }
.fields li.field-sep { height: 1px; margin: 0 7px 2px 15px; padding: 0; background: #dcdcdc; }
.fi { position: absolute; left: 22px; top: 4px; width: 12px; height: 12px; }
.fi-wide { position: absolute; left: 20px; top: 3px; }
.abc { position: absolute; left: 21px; top: 3px; font-size: 10px; font-style: normal; color: #4f7ea0; letter-spacing: -.2px; }
.params { margin-top: 4px; }
.side-head.params + .fields { margin-top: 5px; }

.scrollbar { display: flex; flex-direction: column; width: 15px; background: #f0f0f0; flex: none; }
.sb-btn { flex: none; }
.sb-track { flex: 1; min-height: 0; }
.sb-thumb { background: #c9c9c9; }
.thumb-fields { height: 261px; }
.thumb-marks { height: 144px; }

.cards { width: 207px; margin-left: 6px; display: flex; flex-direction: column; flex: none; }
.card { background: #f9f9f9; border: 1px solid #d4d4d4; position: relative; }
.card h4 { font-weight: 400; font-size: 12px; color: #555; padding: 6px 0 0 6px; height: 30px; letter-spacing: -.2px; }
.card-pages { height: 62px; }
.card-filters { height: 100px; margin-top: 6px; }
.card-marks { height: 213px; margin-top: 7px; }
.card-values { height: 192px; margin-top: 6px; }
.pill-stack { display: flex; flex-direction: column; gap: 3px; padding: 2px 4px 0 3px; }
.pill { height: 20px; border-radius: 10px; color: #fff; line-height: 19px; padding-left: 12px; font-size: 12px; letter-spacing: -.05px; white-space: nowrap; }
.blue { background: #4a96b3; }
.green { background: #00b180; }
.marks-body { width: 176px; margin-left: 6px; margin-top: 5px; }
.mark-select { height: 21px; border: 1px solid #d0d0d0; display: flex; align-items: center; padding-left: 11px; gap: 4px; color: #666; font-size: 11px; position: relative; }
.mark-arrow { position: absolute; right: 0; top: 0; width: 18px; height: 19px; border-left: 1px solid #d8d8d8; }
.mark-arrow::after { content: ""; position: absolute; left: 5px; top: 7px; border: 3.500px solid transparent; border-top: 4px solid #666; border-bottom: 0; }
.mark-grid { display: grid; grid-template-columns: 55px 55px 55px; column-gap: 5.500px; row-gap: 6px; margin-top: 6px; }
.mark-btn { height: 42px; border: 1px solid #d4d4d4; display: flex; flex-direction: column; align-items: center; padding-top: 6px; font-size: 11px; color: #444; gap: 2px; line-height: 15px; padding-right: 2px; }
.mark-pill-row { display: flex; align-items: center; gap: 3px; margin-top: 9px; }
.mark-pill-row svg { margin-left: 7px; flex: none; }
.mark-pill { width: 147px; padding-left: 11px; }
.sb-marks { position: absolute; left: 189px; top: 29px; height: 182px; }

.workspace { width: 931px; margin-left: 6px; display: flex; flex-direction: column; flex: none; }
.shelf { height: 28px; background: #f9f9f9; border: 1px solid #d4d4d4; display: flex; margin-bottom: 6px; flex: none; }
.shelf-label { width: 125px; display: flex; align-items: center; gap: 7px; padding: 0 0 2px 6px; border-right: 1px solid #d4d4d4; color: #555; letter-spacing: -.2px; }
.shelf-pills { display: flex; gap: 2px; padding: 3px 0 0 2px; }
.shelf-pill { width: 149px; padding-left: 11px; }
.view-row { display: flex; gap: 7px; height: 518px; }
.view { width: 770px; background: #fff; border: 1px solid #e0e0e0; overflow: hidden; flex: none; }
.chart { display: block; margin: -1px 0 0 0; }
.chart-title { font-size: 20px; font-weight: 500; fill: #d8709a; stroke: #d8709a; stroke-width: .35px; }
.grid path { stroke: #f1f1f1; fill: none; }
.axis path { stroke: #c9c9c9; fill: none; }
.ticks path { stroke: #ececec; fill: none; }
.hdr-bold { font-size: 11.500px; font-weight: 600; fill: #333; }
.hdr { font-size: 11.500px; fill: #777; letter-spacing: .5px; }
.tick-text { font-size: 12px; fill: #888; }
.axis-title { font-size: 11.500px; font-weight: 600; fill: #444; }
.c1 { fill: #a0cbe8; } .c2 { fill: #8cd17d; } .c3 { fill: #86bcb6; } .c4 { fill: #79706e; } .c5 { fill: #d37295; }
.cat text { font-size: 11.500px; fill: #777; letter-spacing: .25px; }

.right-col { width: 154px; display: flex; flex-direction: column; gap: 6px; flex: none; }
.card-top { height: 58px; }
.top-input { height: 20px; margin: 2px 3px 0; border: 1px solid #999; background: #fff; padding-left: 2px; line-height: 18px; font-size: 11.500px; }
.card-legend { height: 152px; background: #fff; }
.card-legend h4 { background: #f9f9f9; height: 29px; }
.legend li { height: 20px; display: flex; align-items: center; padding-left: 3px; gap: 5px; color: #555; letter-spacing: 0; white-space: nowrap; }
.sw { width: 14px; height: 14px; flex: none; }
.c1bg { background: #a0cbe8; } .c2bg { background: #8cd17d; } .c3bg { background: #86bcb6; }
.c4bg { background: #79706e; } .c5bg { background: #d37295; } .c6bg { background: #72b3ae; }

.tabs { height: 31px; display: flex; background: #e6e6e6; border-top: 1px solid #d4d4d4; border-bottom: 1px solid #d4d4d4; flex: none; }
.tab { height: 29px; display: flex; align-items: center; border-right: 1px solid #d0d0d0; color: #666; font-size: 12px; white-space: nowrap; overflow: hidden; flex: none; letter-spacing: .15px; }
.tab-source { width: 130px; padding-left: 9px; gap: 5px; letter-spacing: -.15px; }
.tab-clip { width: 139px; justify-content: flex-end; padding-right: 12px; }
.tab-w { width: 200px; padding-left: 6px; }
.tab-active { background: #fff; font-weight: 700; color: #555; letter-spacing: .1px; }
.tab-add { width: 32px; justify-content: center; }

.status { height: 20px; background: #f0f0f0; display: flex; align-items: center; position: relative; font-size: 11.500px; color: #444; flex: none; letter-spacing: -.3px; }
.st-a { margin-left: 3px; width: 62px; }
.st-b { width: 118px; }
.st-div { position: absolute; top: 0; width: 1px; height: 20px; background: #d4d4d4; }
.st-d1 { left: 1126px; } .st-d2 { left: 1153px; } .st-d3 { left: 1180px; } .st-d4 { left: 1227px; } .st-d5 { left: 1298px; }
.pager { position: absolute; left: 1236px; top: 5px; }
.views { position: absolute; left: 1308px; top: 4px; }

.taskbar { height: 40px; background: linear-gradient(90deg, #0f0f0f, #1c1a1a 60%, #1e1212); position: relative; display: flex; align-items: center; color: #fff; flex: none; }
.tk { flex: none; }
.ws { margin-left: 16px; }
.ts { margin-left: 31px; }
.tv { margin-left: 30px; }
.te { margin-left: 32px; }
.tm { margin-left: 25px; }
.tedge { margin-left: 25px; }
.tstore { margin-left: 28px; }
.tc1 { margin-left: 26px; }
.tw { margin-left: 25px; }
.tc2 { margin-left: 25px; margin-top: 2px; }
.tactive { margin-left: 7px; width: 48px; height: 40px; background: #4b4b4b; display: flex; align-items: center; justify-content: center; }
.tp { margin-left: 14px; }
.word-w { font-size: 10px; font-weight: 700; fill: #fff; }
.h-badge { font-size: 11px; font-weight: 600; fill: #eee; }
.note-n { font-size: 13px; fill: #fff; }
.tray { margin-left: auto; display: flex; align-items: center; height: 40px; }
.tr-people { margin-right: 22px; }
.tr-caret { margin-right: 9px; }
.tr-sound { margin-right: 9px; }
.tr-lang { font-size: 12px; letter-spacing: -.2px; margin-right: 13px; }
.clock { width: 72px; display: flex; flex-direction: column; align-items: center; font-size: 12px; line-height: 18px; letter-spacing: -.3px; }
.tr-note { margin-left: 4px; margin-right: 15px; margin-top: 4px; }
.ul { position: absolute; bottom: 0; height: 2px; background: #e8b4bc; }
.ul1 { left: 151px; width: 40px; } .ul2 { left: 396px; width: 40px; } .ul3 { left: 445px; width: 41px; }
.ul4 { left: 490px; width: 48px; } .ul5 { left: 543px; width: 40px; }
```
